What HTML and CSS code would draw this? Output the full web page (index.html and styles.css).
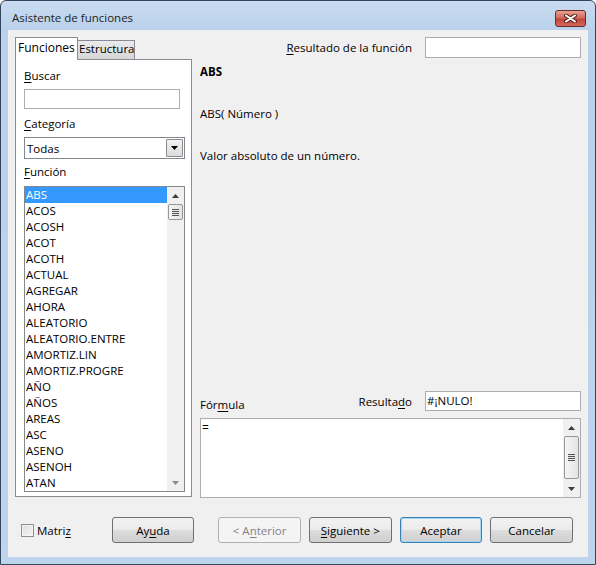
FILE: index.html
```html
<!DOCTYPE html>
<html lang="es">
<head>
    <meta charset="UTF-8">
    <title>Asistente de funciones</title>
    <link rel="stylesheet" href="styles.css">
</head>
<body>
    <div class="window">
        <div class="titlebar">
            <span class="title">Asistente de funciones</span>
            <span class="close">
                <svg width="13" height="9" viewBox="0 0 13 9">
                    <path d="M2 1.5L11 7.5M11 1.5L2 7.5" stroke="#5a2622" stroke-width="4" stroke-linecap="round"/>
                    <path d="M2 1.5L11 7.5M11 1.5L2 7.5" stroke="#fff" stroke-width="2" stroke-linecap="round"/>
                </svg>
            </span>
        </div>

        <div class="client">
            <div class="main">
                <!-- columna izquierda -->
                <div class="left">
                    <div class="tabs">
                        <div class="tab active">Funciones</div>
                        <div class="tab">Estructura</div>
                    </div>
                    <div class="panel">
                        <div class="label"><u>B</u>uscar</div>
                        <div class="input search"></div>
                        <div class="label gap7"><u>C</u>ategoría</div>
                        <div class="select">
                            <span class="select_text">Todas</span>
                            <span class="drop">
                                <svg width="7" height="4" viewBox="0 0 7 4"><path d="M0 0H7L3.5 4Z" fill="#000"/></svg>
                            </span>
                        </div>
                        <div class="label"><u>F</u>unción</div>
                        <div class="listbox">
                            <ul class="items">
                                <li class="selected">ABS</li>
                                <li>ACOS</li>
                                <li>ACOSH</li>
                                <li>ACOT</li>
                                <li>ACOTH</li>
                                <li>ACTUAL</li>
                                <li>AGREGAR</li>
                                <li>AHORA</li>
                                <li>ALEATORIO</li>
                                <li>ALEATORIO.ENTRE</li>
                                <li>AMORTIZ.LIN</li>
                                <li>AMORTIZ.PROGRE</li>
                                <li>AÑO</li>
                                <li>AÑOS</li>
                                <li>AREAS</li>
                                <li>ASC</li>
                                <li>ASENO</li>
                                <li>ASENOH</li>
                                <li>ATAN</li>
                            </ul>
                            <div class="scrollbar">
                                <div class="arrow">
                                    <svg width="7" height="4" viewBox="0 0 7 4"><path d="M0 4L3.5 0L7 4Z" fill="#3c3c3c"/></svg>
                                </div>
                                <div class="thumb small"><span class="grip"></span></div>
                                <div class="track"></div>
                                <div class="arrow">
                                    <svg width="7" height="4" viewBox="0 0 7 4"><path d="M0 0H7L3.5 4Z" fill="#8a8a8a"/></svg>
                                </div>
                            </div>
                        </div>
                    </div>
                </div>

                <!-- columna derecha -->
                <div class="right">
                    <div class="result_row">
                        <span><u>R</u>esultado de la función</span>
                        <div class="input wide"></div>
                    </div>
                    <div class="fname">ABS</div>
                    <div class="syntax">ABS( Número )</div>
                    <div class="syntax">Valor absoluto de un número.</div>

                    <div class="formula">
                        <div class="formula_head">
                            <span class="formula_label">Fór<u>m</u>ula</span>
                            <div class="result_row">
                                <span>Resulta<u>d</u>o</span>
                                <div class="input wide short">#¡NULO!</div>
                            </div>
                        </div>
                        <div class="textarea">
                            <div class="text">=</div>
                            <div class="scrollbar">
                                <div class="arrow">
                                    <svg width="7" height="4" viewBox="0 0 7 4"><path d="M0 4L3.5 0L7 4Z" fill="#3c3c3c"/></svg>
                                </div>
                                <div class="thumb big"><span class="grip"></span></div>
                                <div class="track"></div>
                                <div class="arrow">
                                    <svg width="7" height="4" viewBox="0 0 7 4"><path d="M0 0H7L3.5 4Z" fill="#3c3c3c"/></svg>
                                </div>
                            </div>
                        </div>
                    </div>
                </div>
            </div>

            <div class="buttons">
                <div class="matriz">
                    <span class="checkbox"></span>
                    <span>Matri<u>z</u></span>
                </div>
                <div class="button">Ay<u>u</u>da</div>
                <div class="button disabled spaced">&lt; A<u>n</u>terior</div>
                <div class="button"><u>S</u>iguiente &gt;</div>
                <div class="button default">Aceptar</div>
                <div class="button">Cancelar</div>
            </div>
        </div>
    </div>
</body>
</html>
```

FILE: styles.css
```css
body{
    margin:0;
    background:#fff;
    font-family:"Open Sans","Noto Sans",sans-serif;
    font-size:11.5px;
    color:#000;
}
u{
    text-decoration-thickness:1px;
    text-underline-offset:2px;
}
.window{
    width:596px;
    height:565px;
    box-sizing:border-box;
    border:1px solid #34465c;
    border-radius:6px 6px 0 0;
    background:linear-gradient(#c8dbf0, #b9d1ea 29px, #bdd4ec);
    display:flex;
    flex-direction:column;
}
.titlebar{
    height:29px;
    display:flex;
    justify-content:space-between;
    align-items:flex-start;
    padding-left:11px;
}
.title{
    margin-top:9px;
    line-height:16px;
    font-size:11.5px;
    color:#1e1e1e;
}
.close{
    width:31px;
    height:17px;
    box-sizing:border-box;
    margin:9px 9px 0 0;
    border:1px solid #6b2a25;
    border-radius:3px;
    background:linear-gradient(#e6a193, #d16a5d 45%, #c2453a 55%, #d5685a);
    display:flex;
    align-items:center;
    justify-content:center;
}
.client{
    flex:1;
    margin:0 7px 7px;
    padding:7px 7px 0;
    background:#f0f0f0;
}
.main{
    display:flex;
    gap:8px;
    height:461px;
}

/* izquierda */
.left{
    width:177px;
}
.tabs{
    display:flex;
    align-items:flex-end;
    height:22px;
}
.tab{
    box-sizing:border-box;
    border:1px solid #898c95;
    line-height:16px;
}
.tab.active{
    position:relative;
    z-index:1;
    width:63px;
    height:23px;
    margin-bottom:-1px;
    padding:2px 0 0 2px;
    border-bottom:none;
    background:#fff;
    font-size:12px;
}
.tab:not(.active){
    width:57px;
    height:19px;
    border-left:none;
    border-bottom:none;
    padding-left:1px;
    background:linear-gradient(#ebebeb, #d6d6d6);
}
.panel{
    box-sizing:border-box;
    height:438px;
    border:1px solid #898c95;
    background:#fff;
    padding:8px 0 0 8px;
}
.label{
    line-height:16px;
    margin-top:5px;
}
.panel .label:first-child{
    margin-top:0;
}
.label.gap7{
    margin-top:7px;
}
.input{
    box-sizing:border-box;
    height:20px;
    border:1px solid #abadb3;
    background:#fff;
}
.search{
    width:156px;
    margin-top:5px;
}
.select{
    box-sizing:border-box;
    width:161px;
    height:22px;
    margin-top:5px;
    border:1px solid #828790;
    display:flex;
    justify-content:space-between;
    align-items:center;
    padding:0 1px 0 1px;
}
.select_text{
    padding-left:1px;
}
.drop{
    box-sizing:border-box;
    width:17px;
    height:18px;
    border:1px solid #8c8c8c;
    border-radius:1px;
    background:linear-gradient(#f2f2f2, #dcdcdc);
    display:flex;
    align-items:center;
    justify-content:center;
}
.listbox{
    box-sizing:border-box;
    width:161px;
    height:306px;
    margin-top:6px;
    border:1px solid #828790;
    display:flex;
}
.items{
    list-style:none;
    margin:0;
    padding:0;
    width:142px;
}
.items li{
    height:16px;
    line-height:16px;
    padding-left:1px;
    white-space:nowrap;
}
.items li.selected{
    background:#3399ff;
    color:#fff;
}

/* barra de desplazamiento */
.scrollbar{
    width:17px;
    display:flex;
    flex-direction:column;
    align-items:center;
    background:#f0f0f0;
}
.arrow{
    height:17px;
    display:flex;
    align-items:center;
    justify-content:center;
}
.thumb{
    box-sizing:border-box;
    width:15px;
    border:1px solid #979797;
    border-radius:2px;
    background:linear-gradient(90deg, #f5f5f5, #e4e4e4);
    display:flex;
    align-items:center;
    justify-content:center;
}
.thumb.small{
    height:16px;
}
.thumb.big{
    height:43px;
}
.grip{
    width:7px;
    height:7px;
    background:repeating-linear-gradient(#555 0 1px, #e8e8e8 1px 2px);
}
.track{
    flex:1;
}

/* derecha */
.right{
    width:381px;
    display:flex;
    flex-direction:column;
}
.result_row{
    display:flex;
    justify-content:flex-end;
    align-items:center;
    gap:13px;
    height:21px;
}
.input.wide{
    width:156px;
    height:21px;
}
.input.short{
    height:20px;
    line-height:18px;
    padding-left:1px;
}
.fname{
    margin-top:6px;
    line-height:16px;
    font-weight:bold;
}
.syntax{
    margin-top:26px;
    line-height:16px;
}
.formula{
    margin-top:auto;
}
.formula_head{
    display:flex;
    justify-content:space-between;
    align-items:flex-end;
    height:20px;
}
.formula_head .result_row{
    height:20px;
}
.formula_label{
    line-height:16px;
    margin-bottom:-2px;
}
.textarea{
    box-sizing:border-box;
    height:80px;
    margin-top:7px;
    border:1px solid #abadb3;
    background:#fff;
    display:flex;
    justify-content:space-between;
}
.textarea .text{
    line-height:16px;
    padding:1px 0 0 1px;
    font-size:12px;
}

/* botones */
.buttons{
    display:flex;
    align-items:center;
    margin-top:19px;
    height:26px;
}
.matriz{
    width:97px;
    display:flex;
    align-items:center;
    gap:3px;
    padding-left:6px;
    box-sizing:border-box;
}
.checkbox{
    box-sizing:border-box;
    width:13px;
    height:13px;
    border:1px solid #8e8f8f;
    background:linear-gradient(135deg, #dcdcdc, #f6f6f6);
    box-shadow:inset 0 0 0 1px #f4f4f4;
}
.button{
    box-sizing:border-box;
    width:83px;
    height:26px;
    margin-right:8px;
    border:1px solid #707070;
    border-radius:3px;
    background:linear-gradient(#f2f2f2 0%, #ebebeb 50%, #dddddd 50%, #cfcfcf 100%);
    display:flex;
    align-items:center;
    justify-content:center;
}
.button.spaced{
    margin-left:16px;
}
.button.disabled{
    border-color:#adb2b5;
    background:#f4f4f4;
    color:#838383;
}
.button.default{
    border-color:#3c7fb1;
    box-shadow:inset 0 0 0 1px #9fd8f5;
}
```
